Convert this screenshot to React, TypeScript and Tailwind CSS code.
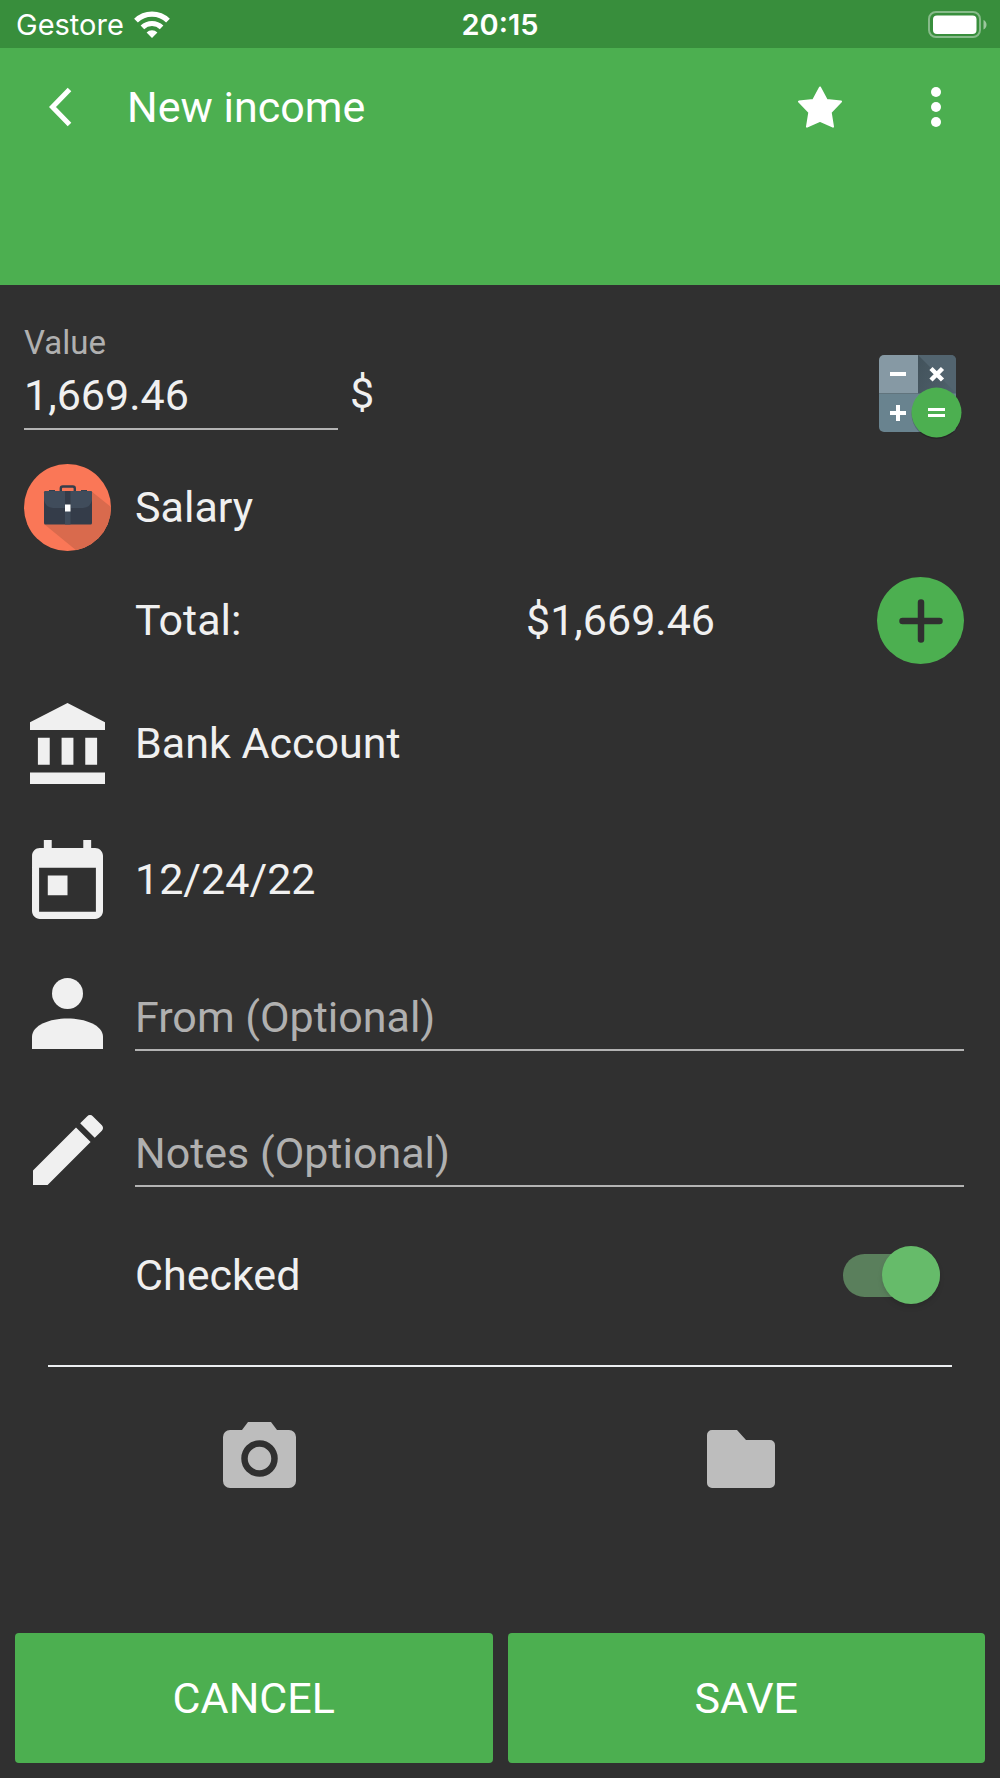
import { useState } from 'react';
import type { ReactNode } from 'react';

function StatusBar() {
  return (
    <div className="grid h-12 grid-cols-3 items-center bg-[#388e3c] px-3 pt-0.5 font-['Inter',sans-serif] text-[29px] leading-8 text-white">
      <div className="flex items-center gap-2.5 pl-1">
        <span>Gestore</span>
        <svg viewBox="0 0 36 27" className="mb-0.5 h-[27px] w-9" fill="none" stroke="currentColor">
          <path d="M2 9.6a23 23 0 0 1 32 0" strokeWidth="5.4" />
          <path d="M8.4 16.3a14 14 0 0 1 19.2 0" strokeWidth="5.2" />
          <path d="M18 27l-5.4-5.6a7.7 7.7 0 0 1 10.8 0z" fill="currentColor" stroke="none" />
        </svg>
      </div>
      <span className="text-center font-semibold">20:15</span>
      <svg viewBox="0 0 60 28" className="h-7 w-[60px] justify-self-end" fill="none">
        <rect x="1" y="1" width="51" height="25" rx="7" stroke="#fff" strokeOpacity="0.4" strokeWidth="2" />
        <rect x="5" y="4.5" width="43.5" height="18.5" rx="4" fill="#fff" />
        <path d="M55.5 9c4 1.5 4 8 0 9.5z" fill="#fff" fillOpacity="0.5" />
      </svg>
    </div>
  );
}

function Header() {
  return (
    <header className="h-[237px] bg-[#4caf50] pl-9 pr-7 pt-[27px] text-white">
      <div className="flex h-16 items-center">
        <button type="button" aria-label="Back" className="flex size-12 items-center justify-center">
          <svg viewBox="0 0 24 40" className="h-10 w-6" fill="none" stroke="currentColor" strokeWidth="5">
            <path d="M21.5 2.5 4.5 20l17 17.5" />
          </svg>
        </button>
        <h1 className="ml-[43px] flex-1 text-[43px] leading-[51px]">New income</h1>
        <button type="button" aria-label="Favorite" className="flex size-16 items-center justify-center">
          <svg viewBox="0 0 44 42" className="h-[42px] w-11" fill="currentColor" stroke="currentColor" strokeWidth="2" strokeLinejoin="round">
            <path d="M22 1.5 28.7 14 43 15.6 32.7 26.3 35 40.7 22 34.8 9 40.7 11.3 26.3 1 15.6 15.3 14z" />
          </svg>
        </button>
        <button type="button" aria-label="More options" className="ml-12 flex h-16 w-[72px] items-center justify-center">
          <svg viewBox="0 0 10 40" className="h-10 w-2.5" fill="currentColor">
            <circle cx="5" cy="5" r="5" />
            <circle cx="5" cy="20" r="5" />
            <circle cx="5" cy="35" r="5" />
          </svg>
        </button>
      </div>
    </header>
  );
}

function CalculatorIcon() {
  return (
    <svg viewBox="0 0 84 84" className="size-[84px]">
      <defs>
        <clipPath id="calc-body">
          <rect width="77" height="77" rx="5" />
        </clipPath>
        <linearGradient id="calc-shade" x1="0" y1="0" x2="1" y2="1">
          <stop offset="0" stopColor="#42525b" />
          <stop offset="0.5" stopColor="#4b5c66" />
          <stop offset="1" stopColor="#546e7a" />
        </linearGradient>
      </defs>
      <g clipPath="url(#calc-body)">
        <rect width="39" height="38.5" fill="#8699a4" />
        <rect x="39" width="38" height="77" fill="url(#calc-shade)" />
        <path d="M39 0h38v38z" fill="#52646f" />
        <rect y="38.5" width="77" height="39" fill="#69838f" />
      </g>
      <circle cx="57.5" cy="59" r="25" fill="#000" opacity="0.2" />
      <circle cx="57.5" cy="57.5" r="25" fill="#4caf50" />
      <g stroke="#fff" strokeWidth="4" fill="none">
        <path d="M11 19h16M11 58h16M19 50v16" />
        <path d="M52 13.5 63.5 25M63.5 13.5 52 25" strokeWidth="4.5" />
        <path d="M49 54.5h17M49 60.5h17" strokeWidth="3" />
      </g>
    </svg>
  );
}

function SalaryIcon() {
  return (
    <svg viewBox="0 0 87 87" className="size-[87px]">
      <defs>
        <clipPath id="salary-disc">
          <circle cx="43.5" cy="43.5" r="43.5" />
        </clipPath>
      </defs>
      <g clipPath="url(#salary-disc)">
        <rect width="87" height="87" fill="#fa7757" />
        <path d="M67 27 87 43v44H53L20 60z" fill="#d96a4d" />
      </g>
      <path d="M36.8 27v-2.500a2 2 0 0 1 2-2h10a2 2 0 0 1 2 2V27" fill="none" stroke="#343e4b" strokeWidth="2.4" />
      <path d="M25 26h6v2h-6zM57 26h6v2h-6z" fill="#343e4b" />
      <rect x="20" y="27" width="48" height="33.5" rx="1.5" fill="#343c49" />
      <path d="M20 28.5a1.5 1.5 0 0 1 1.5-1.5h45a1.5 1.5 0 0 1 1.5 1.5V36q-1.5 7.5-9 8H29q-7.5-.5-9-8z" fill="#404c5b" />
      <rect x="41" y="27" width="5.5" height="17" fill="#343c49" />
      <rect x="41" y="44" width="5.5" height="16.5" fill="#404c5b" />
      <rect x="41" y="40.5" width="5.5" height="7" fill="#fff" />
    </svg>
  );
}

function BankIcon() {
  return (
    <svg viewBox="2 1 19 21" preserveAspectRatio="none" className="h-[81px] w-[75px]" fill="currentColor">
      <path d="M4 10v7h3v-7H4zm6 0v7h3v-7h-3zM2 22h19v-3H2v3zm14-12v7h3v-7h-3zm-4.5-9L2 6v2h19V6l-9.5-5z" />
    </svg>
  );
}

function CalendarIcon() {
  return (
    <svg viewBox="3 1 18 20" className="h-[79px] w-[71px]" fill="currentColor">
      <path d="M19 3h-1V1h-2v2H8V1H6v2H5c-1.11 0-1.99.9-1.99 2L3 19c0 1.1.89 2 2 2h14c1.1 0 2-.9 2-2V5c0-1.1-.9-2-2-2zm.2 16.2H4.8V8h14.4v11.2zM7 10h5v5H7z" />
    </svg>
  );
}

function PersonIcon() {
  return (
    <svg viewBox="0 0 71 71" className="size-[71px]" fill="currentColor">
      <circle cx="35.5" cy="15.5" r="15.5" />
      <path d="M0 71V59C0 47 18 40.5 35.5 40.5S71 47 71 59v12z" />
    </svg>
  );
}

function PencilIcon() {
  return (
    <svg viewBox="3 3 18 18" className="size-[70px]" fill="currentColor">
      <path d="M3 17.25V21h3.75L17.81 9.94l-3.75-3.75L3 17.25zM20.71 7.04c.39-.39.39-1.02 0-1.41l-2.34-2.34c-.39-.39-1.02-.39-1.41 0l-1.83 1.83 3.75 3.75 1.83-1.83z" />
    </svg>
  );
}

type RowProps = {
  icon?: ReactNode;
  children: ReactNode;
};

function Row({ icon, children }: RowProps) {
  return (
    <div className="flex h-[87px] items-center gap-6">
      <div className="flex w-[87px] shrink-0 justify-center">{icon}</div>
      {children}
    </div>
  );
}

type FieldProps = {
  icon: ReactNode;
  label: string;
};

function Field({ icon, label }: FieldProps) {
  return (
    <div className="flex h-[72px] items-end gap-6">
      <div className="flex w-[87px] shrink-0 justify-center pb-0.5">{icon}</div>
      <input
        type="text"
        aria-label={label}
        placeholder={label}
        className="h-[62px] min-w-0 flex-1 border-b-2 border-[#b3b3b3] bg-transparent pb-1 text-[43px] leading-[51px] outline-none placeholder:text-[#b0b0b0]"
      />
    </div>
  );
}

export default function App() {
  const [value, setValue] = useState('1,669.46');
  const [checked, setChecked] = useState(true);

  return (
    <div className="flex min-h-screen flex-col bg-[#303030] font-['Roboto',sans-serif] text-[43px] leading-[51px] text-[#f0f0f0]">
      <StatusBar />
      <Header />

      <main className="flex-1 pl-6 pr-9 pt-9">
        {/* Amount */}
        <div className="flex h-[109px] items-start">
          <div className="w-[314px]">
            <label htmlFor="value" className="block h-11 pt-0.5 text-[33px] leading-10 text-[#b0b0b0]">Value</label>
            <input
              id="value"
              type="text"
              value={value}
              onChange={(e) => setValue(e.target.value)}
              className="h-[65px] w-full border-b-2 border-[#b3b3b3] bg-transparent pb-1 outline-none"
            />
          </div>
          <span className="ml-3 mt-[47px]">$</span>
          <button type="button" aria-label="Calculator" className="ml-auto mr-px mt-[34px]">
            <CalculatorIcon />
          </button>
        </div>

        <div className="mt-[34px]">
          <Row icon={<SalaryIcon />}>
            <span>Salary</span>
          </Row>
        </div>

        <div className="mt-[26px]">
          <Row>
            <span className="flex-1">Total:</span>
            <span className="mr-[138px]">$1,669.46</span>
            <button type="button" aria-label="Add" className="flex size-[87px] items-center justify-center rounded-full bg-[#4caf50]">
              <svg viewBox="0 0 44 44" className="size-11" fill="none" stroke="#303030" strokeWidth="6.5" strokeLinecap="round">
                <path d="M3.5 22h37M22 3.5v37" />
              </svg>
            </button>
          </Row>
        </div>

        <div className="mt-9 flex flex-col gap-[49px]">
          <Row icon={<BankIcon />}>
            <span>Bank Account</span>
          </Row>
          <Row icon={<CalendarIcon />}>
            <span>12/24/22</span>
          </Row>
        </div>

        <div className="mt-14 flex flex-col gap-16">
          <Field icon={<PersonIcon />} label="From (Optional)" />
          <Field icon={<PencilIcon />} label="Notes (Optional)" />
        </div>

        <div className="mt-[45px]">
          <Row>
            <label htmlFor="checked" className="flex-1">Checked</label>
            <input
              id="checked"
              type="checkbox"
              role="switch"
              checked={checked}
              onChange={(e) => setChecked(e.target.checked)}
              className="relative mr-6 h-[43px] w-[97px] appearance-none rounded-full bg-[#757575] before:absolute before:-top-2 before:left-0 before:size-[58px] before:rounded-full before:bg-[#bdbdbd] before:shadow-md checked:bg-[#5a7f5c] checked:before:left-[39px] checked:before:bg-[#66bb6a]"
            />
          </Row>
        </div>

        <hr className="ml-6 mr-3 mt-[46px] border-t-2 border-[#eceff1]" />
      </main>

      {/* Attachments */}
      <div className="mt-[55px] grid h-[66px] grid-cols-2 items-end justify-items-center px-[18px] text-[#bdbdbd]">
        <button type="button" aria-label="Take photo">
          <svg viewBox="0 0 73 66" className="block h-[66px] w-[73px]">
            <path d="M7 8h12l6-8h23l6 8h12a7 7 0 0 1 7 7v44a7 7 0 0 1-7 7H7a7 7 0 0 1-7-7V15a7 7 0 0 1 7-7z" fill="currentColor" />
            <circle cx="36.5" cy="36.5" r="15" fill="none" stroke="#303030" strokeWidth="6.5" />
          </svg>
        </button>
        <button type="button" aria-label="Choose file">
          <svg viewBox="0 0 68 58" className="block h-[58px] w-[68px]" fill="currentColor">
            <path d="M5 0h25l9 10h24a5 5 0 0 1 5 5v38a5 5 0 0 1-5 5H5a5 5 0 0 1-5-5V5a5 5 0 0 1 5-5z" />
          </svg>
        </button>
      </div>

      <footer className="mt-[145px] grid grid-cols-2 gap-[15px] px-[15px] pb-[15px] text-white">
        <button type="button" className="h-[130px] rounded bg-[#4caf50]">CANCEL</button>
        <button type="button" className="h-[130px] rounded bg-[#4caf50]">SAVE</button>
      </footer>
    </div>
  );
}
